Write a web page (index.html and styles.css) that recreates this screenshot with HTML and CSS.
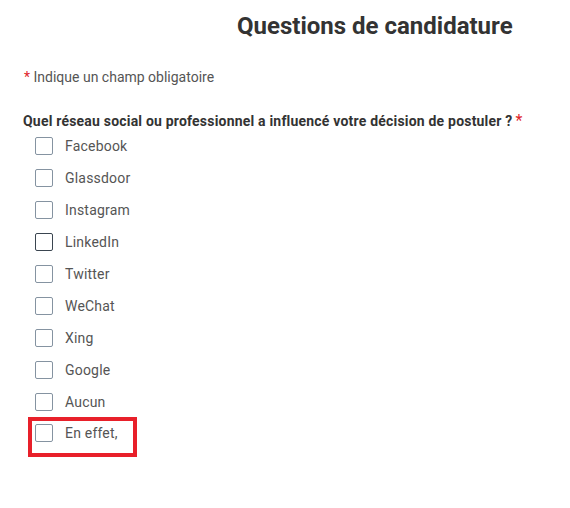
FILE: index.html
```html
<!DOCTYPE html>
<html lang="fr">
<head>
  <meta charset="UTF-8" />
  <title>Questions de candidature</title>
  <link rel="stylesheet" href="styles.css">
</head>
<body>
  <header class="page-head">
    <h1>Questions de candidature</h1>
  </header>

  <main class="form">
    <p class="required-note"><span class="star">*</span> Indique un champ obligatoire</p>

    <fieldset class="question">
      <legend>Quel réseau social ou professionnel a influencé votre décision de postuler ?<span class="star">*</span></legend>
      <ul class="options">
        <li><label><span class="box"></span>Facebook</label></li>
        <li><label><span class="box"></span>Glassdoor</label></li>
        <li><label><span class="box"></span>Instagram</label></li>
        <li><label><span class="box dark"></span>LinkedIn</label></li>
        <li><label><span class="box"></span>Twitter</label></li>
        <li><label><span class="box"></span>WeChat</label></li>
        <li><label><span class="box"></span>Xing</label></li>
        <li><label><span class="box"></span>Google</label></li>
        <li><label><span class="box"></span>Aucun</label></li>
        <li class="marked"><label><span class="box"></span>En effet,</label></li>
      </ul>
    </fieldset>
  </main>
</body>
</html>
```

FILE: styles.css
```css
html, body {
  margin: 0;
  padding: 0;
  background: #fff;
  font-family: Roboto, "Liberation Sans", sans-serif;
  color: #333;
}

.page-head {
  padding: 12px 0 0 237px;
}

.page-head h1 {
  margin: 0;
  font-size: 24px;
  line-height: 28px;
  font-weight: 700;
  color: #333;
}

.form {
  padding: 0 0 0 23px;
}

.required-note {
  margin: 28px 0 0 1px;
  font-size: 14px;
  line-height: 18px;
  color: #555;
}

.star {
  color: #e0252b;
  font-weight: 400;
}

.question {
  margin: 26px 0 0;
  padding: 0;
  border: none;
}

.question legend {
  padding: 0;
  font-size: 14px;
  line-height: 18px;
  font-weight: 700;
  letter-spacing: 0.2px;
  color: #333;
}

.question legend .star {
  margin-left: 3px;
  font-size: 16px;
}

.options {
  list-style: none;
  margin: 0;
  padding: 0;
}

.options li {
  height: 32px;
  display: flex;
  align-items: center;
}

.options label {
  display: flex;
  align-items: center;
  gap: 12px;
  padding-left: 12px;
  font-size: 14px;
  color: #555;
  letter-spacing: 0.2px;
}

.box {
  width: 16px;
  height: 16px;
  border: 1px solid #8593a1;
  border-radius: 2px;
  background: #fff;
}

.box.dark {
  border-color: #3a4550;
}

.options li.marked {
  margin-left: 5px;
  margin-top: -1px;
  width: 101px;
  height: 32px;
  border: 4px solid #e8202a;
}

.options li.marked label {
  padding-left: 3px;
  padding-bottom: 8px;
}
```
